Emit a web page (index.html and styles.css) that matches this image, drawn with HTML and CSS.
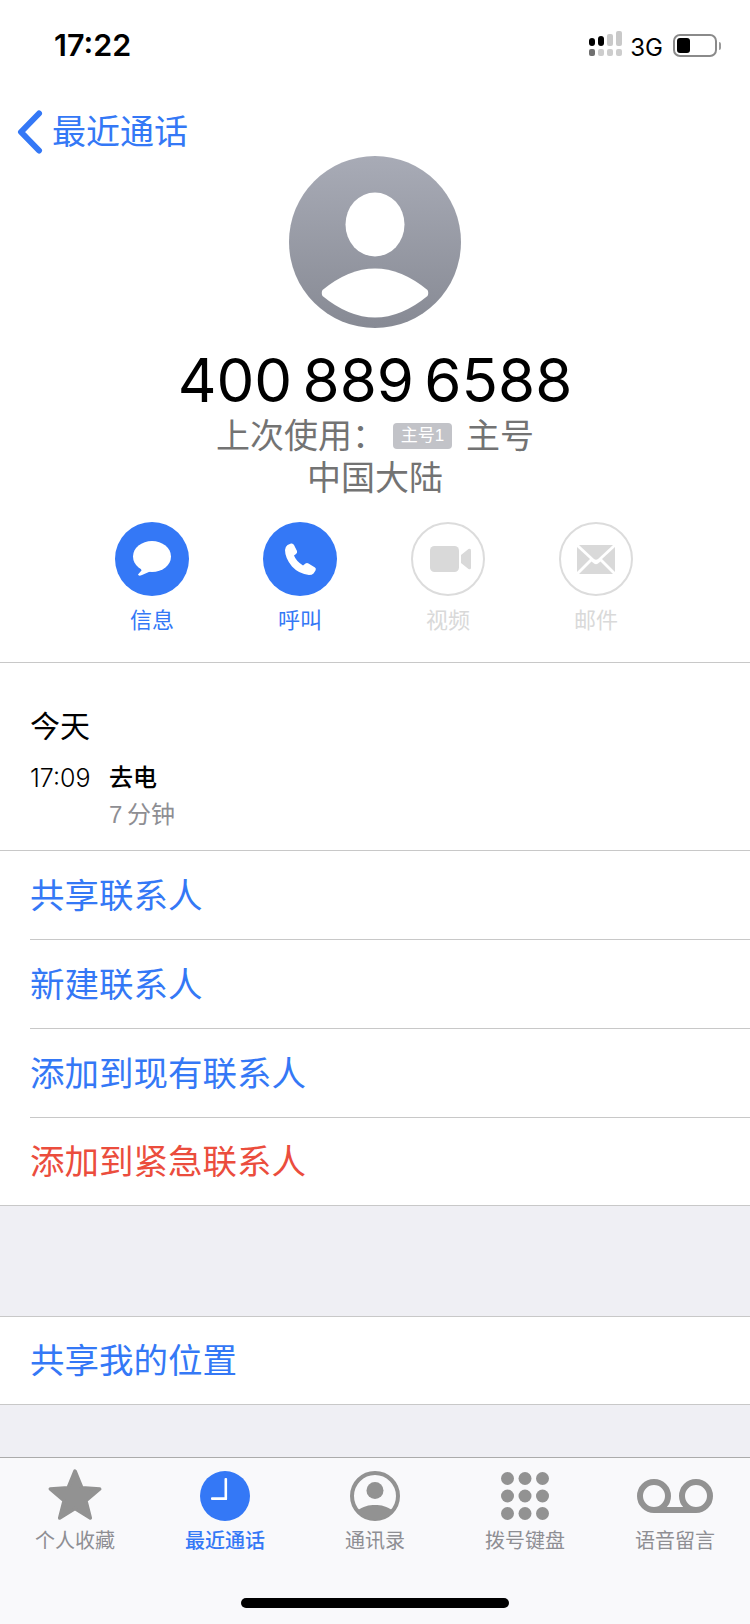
FILE: index.html
```html
<!DOCTYPE html>
<html lang="zh-CN">
<head>
    <meta charset="UTF-8">
    <title>最近通话</title>
    <link rel="stylesheet" href="styles.css">
</head>
<body>
    <div class="status-bar">
        <span class="clock-text">17:22</span>
        <div class="status-right">
            <svg class="signal" width="34" height="26" viewBox="0 0 34 26">
                <rect x="0" y="7" width="6" height="8" rx="3" fill="#000"/>
                <rect x="9" y="5" width="6" height="10" rx="3" fill="#000"/>
                <rect x="18" y="3" width="6" height="12" rx="2" fill="#c9c9c9"/>
                <rect x="27" y="0" width="6" height="15" rx="2" fill="#c9c9c9"/>
                <rect x="0" y="18" width="6" height="7" rx="2" fill="#707070"/>
                <rect x="9" y="18" width="6" height="7" rx="2" fill="#cdcdcd"/>
                <rect x="18" y="18" width="6" height="7" rx="2" fill="#cdcdcd"/>
                <rect x="27" y="18" width="6" height="7" rx="2" fill="#cdcdcd"/>
            </svg>
            <span class="network">3G</span>
            <div class="battery"><div class="battery-fill"></div></div>
            <div class="battery-nub"></div>
        </div>
    </div>

    <div class="nav-bar">
        <svg class="back-icon" width="26" height="44" viewBox="0 0 26 44">
            <path d="M22 3.5 L4 22 L22 40.5" fill="none" stroke="#3478f6" stroke-width="6" stroke-linecap="round" stroke-linejoin="round"/>
        </svg>
        <span class="back-text">最近通话</span>
    </div>

    <div class="contact">
        <svg class="avatar" width="172" height="172" viewBox="0 0 172 172">
            <defs>
                <linearGradient id="avatarGrad" x1="0" y1="0" x2="0" y2="1">
                    <stop offset="0" stop-color="#a8abb6"/>
                    <stop offset="1" stop-color="#878a94"/>
                </linearGradient>
            </defs>
            <circle cx="86" cy="86" r="86" fill="url(#avatarGrad)"/>
            <ellipse cx="86" cy="68.5" rx="29.5" ry="32" fill="#fff"/>
            <path d="M33.5 134 Q86 91 138.5 134 Q140 137 138.5 140 Q86 183 33.5 140 Q32 137 33.5 134 Z" fill="#fff"/>
        </svg>
        <div class="phone-number">400 889 6588</div>
        <div class="sub-line">
            <span>上次使用：</span>
            <span class="sim-badge">主号1</span>
            <span>主号</span>
        </div>
        <div class="sub-line">中国大陆</div>
    </div>

    <div class="actions">
        <div class="action">
            <svg class="action-icon" width="74" height="74" viewBox="0 0 74 74">
                <circle cx="37" cy="37" r="37" fill="#3478f6"/>
                <ellipse cx="37" cy="34.5" rx="19" ry="15.5" fill="#fff"/>
                <path d="M25 43 L26.5 48.5 L23 52.5 Q23.5 54.5 27 53 L35 49.5 Z" fill="#fff"/>
            </svg>
            <span class="action-label">信息</span>
        </div>
        <div class="action">
            <svg class="action-icon" width="74" height="74" viewBox="0 0 74 74">
                <circle cx="37" cy="37" r="37" fill="#3478f6"/>
                <path d="M24.5 23 L28 21.5 Q30 21 31 23 L34 29 Q34.5 31 33 32 L31 33.5 Q33 39 40 43.5 L42.5 41.5 Q44 40.5 45.5 41.5 L52 45.5 Q53.5 46.5 52.5 48.5 L50.5 51.5 Q49 53 46 53 Q36 52 29 44.5 Q22 36 22 28 Q22 25 24.5 23 Z" fill="#fff"/>
            </svg>
            <span class="action-label">呼叫</span>
        </div>
        <div class="action disabled">
            <svg class="action-icon" width="74" height="74" viewBox="0 0 74 74">
                <circle cx="37" cy="37" r="36" fill="none" stroke="#dcdcdc" stroke-width="2"/>
                <rect x="19" y="24" width="29" height="26" rx="4.5" fill="#d9d9d9"/>
                <path d="M50 33 L57.5 27 Q60 25.8 60 28.5 V45.5 Q60 48.2 57.5 47 L50 41 Z" fill="#d9d9d9"/>
            </svg>
            <span class="action-label">视频</span>
        </div>
        <div class="action disabled">
            <svg class="action-icon" width="74" height="74" viewBox="0 0 74 74">
                <circle cx="37" cy="37" r="36" fill="none" stroke="#dcdcdc" stroke-width="2"/>
                <path d="M20 23 H54 L39 37 Q37 38.5 35 37 Z" fill="#d9d9d9"/>
                <path d="M18 25 L31 37 L18 50 Z" fill="#d9d9d9"/>
                <path d="M56 25 L43 37 L56 50 Z" fill="#d9d9d9"/>
                <path d="M20 52 L32.5 39.5 L35 41.5 Q37 43 39 41.5 L41.5 39.5 L54 52 Z" fill="#d9d9d9"/>
            </svg>
            <span class="action-label">邮件</span>
        </div>
    </div>

    <div class="history">
        <div class="history-date">今天</div>
        <div class="history-row">
            <span class="history-time">17:09</span>
            <span class="history-type">去电</span>
        </div>
        <div class="history-duration">7 分钟</div>
    </div>

    <div class="list">
        <div class="list-row"><span>共享联系人</span></div>
        <div class="list-row"><span>新建联系人</span></div>
        <div class="list-row"><span>添加到现有联系人</span></div>
        <div class="list-row last red"><span>添加到紧急联系人</span></div>
    </div>

    <div class="gap-big"></div>

    <div class="list">
        <div class="list-row last"><span>共享我的位置</span></div>
    </div>

    <div class="gap-small"></div>

    <div class="tab-bar">
        <div class="tabs">
            <div class="tab">
                <div class="tab-icon">
                    <svg width="56" height="54" viewBox="0 0 56 54">
                        <path d="M28 4 L34.8 20.7 L52.7 22 L38.9 33.6 L43.3 51 L28 41.5 L12.7 51 L17.1 33.6 L3.3 22 L21.2 20.7 Z" fill="#929292" stroke="#929292" stroke-width="3.5" stroke-linejoin="round"/>
                    </svg>
                </div>
                <span class="tab-label">个人收藏</span>
            </div>
            <div class="tab active">
                <div class="tab-icon low">
                    <svg width="50" height="50" viewBox="0 0 50 50">
                        <circle cx="25" cy="25" r="25" fill="#3478f6"/>
                        <rect x="24.5" y="7" width="2.6" height="22" rx="1" fill="#fff"/>
                        <rect x="11" y="26.3" width="16" height="2.7" rx="1" fill="#fff"/>
                    </svg>
                </div>
                <span class="tab-label">最近通话</span>
            </div>
            <div class="tab">
                <div class="tab-icon low">
                    <svg width="50" height="50" viewBox="0 0 50 50">
                        <circle cx="25" cy="25" r="23" fill="none" stroke="#929292" stroke-width="4"/>
                        <circle cx="25" cy="19.5" r="8.5" fill="#929292"/>
                        <path d="M7 40 C13 35 19 34 25 34 C31 34 37 35 43 40 A23 23 0 0 1 7 40 Z" fill="#929292"/>
                    </svg>
                </div>
                <span class="tab-label">通讯录</span>
            </div>
            <div class="tab">
                <div class="tab-icon low">
                    <svg width="56" height="54" viewBox="0 0 56 54">
                        <circle cx="10.5" cy="9.5" r="6.5" fill="#929292"/>
                        <circle cx="28" cy="9.5" r="6.5" fill="#929292"/>
                        <circle cx="45.5" cy="9.5" r="6.5" fill="#929292"/>
                        <circle cx="10.5" cy="27" r="6.5" fill="#929292"/>
                        <circle cx="28" cy="27" r="6.5" fill="#929292"/>
                        <circle cx="45.5" cy="27" r="6.5" fill="#929292"/>
                        <circle cx="10.5" cy="44.5" r="6.5" fill="#929292"/>
                        <circle cx="28" cy="44.5" r="6.5" fill="#929292"/>
                        <circle cx="45.5" cy="44.5" r="6.5" fill="#929292"/>
                    </svg>
                </div>
                <span class="tab-label">拨号键盘</span>
            </div>
            <div class="tab">
                <div class="tab-icon low">
                    <svg width="76" height="34" viewBox="0 0 76 34">
                        <circle cx="17" cy="17" r="14" fill="none" stroke="#929292" stroke-width="6"/>
                        <circle cx="59" cy="17" r="14" fill="none" stroke="#929292" stroke-width="6"/>
                        <rect x="17" y="28" width="42" height="6" fill="#929292"/>
                    </svg>
                </div>
                <span class="tab-label">语音留言</span>
            </div>
        </div>
        <div class="home-indicator"></div>
    </div>
</body>
</html>
```

FILE: styles.css
```css
/* page */
html, body {
    margin: 0;
    padding: 0;
}
body {
    width: 750px;
    height: 1624px;
    overflow: hidden;
    background-color: #fff;
    font-family: "Liberation Sans", "Noto Sans CJK SC", sans-serif;
}

/* status bar */
.status-bar {
    height: 88px;
    box-sizing: border-box;
    display: flex;
    justify-content: space-between;
    align-items: flex-start;
    padding: 27px 29px 0 54px;
}
.clock-text {
    font-family: Inter, sans-serif;
    font-size: 30.5px;
    line-height: 36px;
    font-weight: 600;
    color: #000;
}
.status-right {
    display: flex;
    align-items: flex-start;
    padding-top: 4px;
}
.network {
    font-family: Inter, sans-serif;
    font-size: 24px;
    line-height: 30px;
    margin: 2px 10px 0 7px;
    color: #000;
}
.battery {
    width: 44px;
    height: 23px;
    box-sizing: border-box;
    border: 2px solid #8a8a8a;
    border-radius: 7px;
    padding: 2px;
    margin-top: 3px;
}
.battery-fill {
    width: 13px;
    height: 15px;
    background-color: #000;
    border-radius: 3px;
}
.battery-nub {
    width: 2px;
    height: 8px;
    margin: 11px 0 0 2px;
    background-color: #9a9a9a;
    border-radius: 0 2px 2px 0;
}

/* back link */
.nav-bar {
    height: 68px;
    box-sizing: border-box;
    padding: 22px 0 0 17px;
    display: flex;
    align-items: flex-start;
}
.back-text {
    font-size: 34px;
    line-height: 44px;
    color: #3478f6;
    margin-left: 9px;
}

/* contact head */
.contact {
    display: flex;
    flex-direction: column;
    align-items: center;
}
.avatar {
    display: block;
}
.phone-number {
    font-family: Inter, sans-serif;
    font-size: 60px;
    line-height: 70px;
    word-spacing: -6.5px;
    margin-top: 17px;
    color: #000;
}
.sub-line {
    display: flex;
    align-items: center;
    font-size: 34px;
    line-height: 42px;
    color: #737373;
}
.sim-badge {
    width: 59px;
    height: 26px;
    line-height: 26px;
    margin: 0 14px 0 7px;
    background-color: #c2c3c8;
    border-radius: 4px;
    text-align: center;
    font-size: 17px;
    color: #fff;
}

/* four round buttons */
.actions {
    display: grid;
    grid-template-columns: repeat(4, 148px);
    padding: 23px 0 0 78px;
    height: 164px;
    box-sizing: border-box;
    border-bottom: 1px solid #c8c8c8;
}
.action {
    display: flex;
    flex-direction: column;
    align-items: center;
}
.action-icon {
    display: block;
}
.action-label {
    font-size: 22px;
    line-height: 30px;
    margin-top: 10px;
    color: #3478f6;
}
.disabled .action-label {
    color: #d9d9d9;
}

/* call history */
.history {
    height: 188px;
    box-sizing: border-box;
    padding: 44px 0 0 30px;
    border-bottom: 1px solid #c8c8c8;
}
.history-date {
    font-size: 30px;
    line-height: 40px;
    color: #000;
}
.history-row {
    display: flex;
    margin-top: 16px;
    line-height: 30px;
}
.history-time {
    width: 79px;
    font-family: Inter, sans-serif;
    font-size: 25px;
    font-weight: 300;
    color: #000;
}
.history-type {
    font-size: 24px;
    font-weight: 500;
    color: #000;
}
.history-duration {
    font-size: 24px;
    line-height: 30px;
    word-spacing: -2px;
    margin: 7px 0 0 79px;
    color: #8e8e93;
}

/* blue rows */
.list {
    background-color: #fff;
    padding-left: 30px;
    border-bottom: 1px solid #c8c8c8;
}
.list-row {
    height: 89px;
    box-sizing: border-box;
    display: flex;
    align-items: center;
    padding-bottom: 5px;
    font-size: 34.5px;
    color: #3478f6;
    border-bottom: 1px solid #c8c8c8;
}
.list-row.last {
    height: 87px;
    border-bottom: 0;
}
.list-row.red {
    color: #eb4d3d;
}
.gap-big {
    height: 110px;
    background-color: #efeff4;
    border-bottom: 1px solid #c8c8c8;
}
.gap-small {
    height: 52px;
    background-color: #efeff4;
}

/* tab bar */
.tab-bar {
    height: 167px;
    box-sizing: border-box;
    background-color: #f9f9fb;
    border-top: 1px solid #ababab;
}
.tabs {
    display: grid;
    grid-template-columns: repeat(5, 150px);
}
.tab {
    display: flex;
    flex-direction: column;
    align-items: center;
}
.tab-icon {
    height: 72px;
    box-sizing: border-box;
    display: flex;
    align-items: center;
    justify-content: center;
}
.tab-icon.low {
    padding-top: 4px;
}
.tab-label {
    font-size: 20px;
    line-height: 24px;
    margin-top: -1px;
    color: #8e8e93;
}
.tab.active .tab-label {
    color: #3478f6;
    font-weight: 500;
}
.home-indicator {
    width: 268px;
    height: 10px;
    margin: 45px auto 0;
    background-color: #000;
    border-radius: 5px;
}
```
